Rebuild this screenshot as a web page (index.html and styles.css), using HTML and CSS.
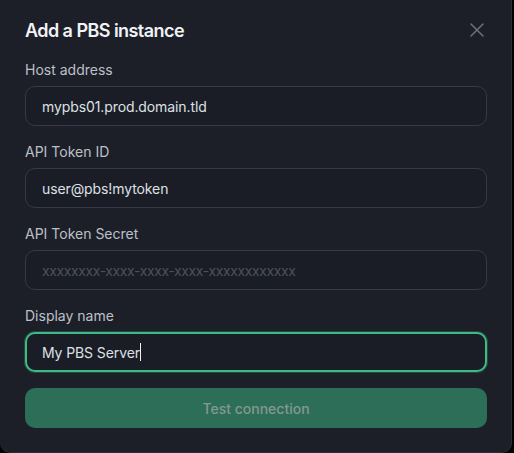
FILE: index.html
```html
<!DOCTYPE html>
<html lang="en">
<head>
<meta charset="utf-8">
<title>Add a PBS instance</title>
<link rel="stylesheet" href="styles.css">
</head>
<body>
<div class="dialog">
  <div class="header">
    <h2 class="title">Add a PBS instance</h2>
    <button class="close" aria-label="Close">
      <svg width="14" height="14" viewBox="0 0 14 14"><path d="M1 1L13 13M13 1L1 13" stroke="#6d717d" stroke-width="1.5" stroke-linecap="round"/></svg>
    </button>
  </div>
  <div class="form">
    <div class="field">
      <label class="label">Host address</label>
      <input class="input" type="text" value="mypbs01.prod.domain.tld">
    </div>
    <div class="field">
      <label class="label">API Token ID</label>
      <input class="input" type="text" value="user@pbs!mytoken">
    </div>
    <div class="field">
      <label class="label">API Token Secret</label>
      <input class="input" type="password" placeholder="xxxxxxxx-xxxx-xxxx-xxxx-xxxxxxxxxxxx">
    </div>
    <div class="field">
      <label class="label">Display name</label>
      <div class="input focused"><span>My PBS Server</span><span class="caret"></span></div>
    </div>
    <button class="submit">Test connection</button>
  </div>
</div>
</body>
</html>
```

FILE: styles.css
```css
html, body {
  margin: 0;
  padding: 0;
  background: #000;
  height: 453px;
  overflow: hidden;
}
body {
  font-family: Inter, "Liberation Sans", sans-serif;
}
.dialog {
  box-sizing: border-box;
  width: 512px;
  height: 453px;
  background: #1c1f28;
  border: 1px solid #2a2d37;
  border-top: none;
  border-left: none;
  border-radius: 0 0 10px 10px;
  padding: 16px 24px 24px 25px;
}
.header {
  display: flex;
  align-items: center;
  justify-content: space-between;
  height: 28px;
  margin-bottom: 16px;
}
.title {
  margin: 0;
  font-size: 18px;
  font-weight: 600;
  color: #f1f2f5;
  letter-spacing: -0.55px;
}
.close {
  background: none;
  border: none;
  padding: 0;
  width: 14px;
  height: 14px;
  margin-right: 3px;
  display: flex;
}
.form {
  display: flex;
  flex-direction: column;
  gap: 16px;
}
.field {
  display: flex;
  flex-direction: column;
  gap: 6px;
}
.label {
  font-size: 14px;
  line-height: 20px;
  color: #bcc0c8;
}
.input {
  box-sizing: border-box;
  height: 40px;
  width: 100%;
  background: #1a1d25;
  border: 1px solid #373a46;
  border-radius: 10px;
  padding: 0 16px;
  font-family: inherit;
  font-size: 14px;
  letter-spacing: -0.1px;
  color: #dfe0e5;
  outline: none;
  display: flex;
  align-items: center;
}
.input::placeholder {
  color: #4c505b;
  letter-spacing: -0.4px;
}
.input.focused {
  border: 2px solid #3dbb87;
  padding: 0 15px;
  box-shadow: 0 0 0 1px rgba(61, 187, 135, 0.25);
}
.caret {
  display: inline-block;
  width: 1px;
  height: 18px;
  background: #f0f0f0;
}
.submit {
  box-sizing: border-box;
  height: 40px;
  width: 100%;
  border: none;
  border-radius: 10px;
  background: #2d6e58;
  color: #84988f;
  font-family: inherit;
  font-size: 14px;
  font-weight: 500;
}
```
